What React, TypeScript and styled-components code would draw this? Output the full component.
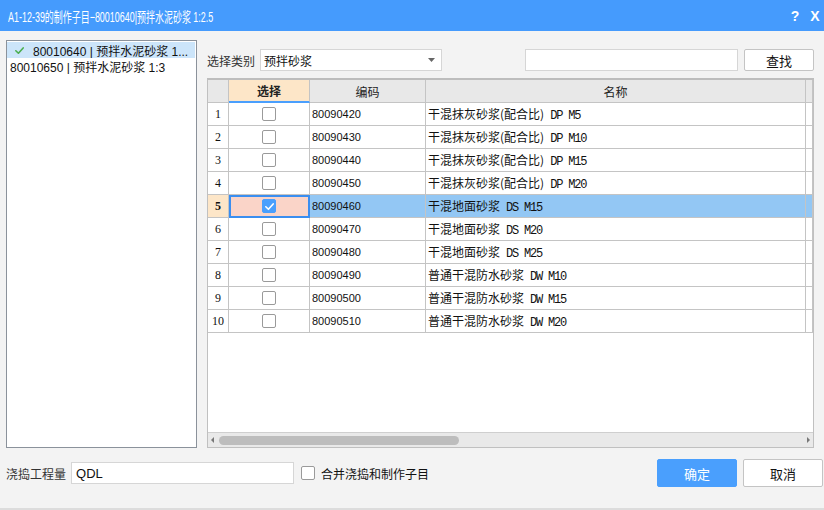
import React from "react";
import styled, { createGlobalStyle, css } from "styled-components";

const Global = createGlobalStyle`
  html, body { margin: 0; padding: 0; background: #f3f3f3; }
  body { font-family: "Liberation Sans", "Noto Sans CJK SC", sans-serif; }
  * { box-sizing: border-box; }
`;

const Window = styled.div`
  width: 824px;
  height: 510px;
  background: #f3f3f3;
  display: flex;
  flex-direction: column;
  overflow: hidden;
`;

const TitleBar = styled.div`
  height: 31px;
  flex: none;
  background: #459bfd;
  color: #fff;
  display: flex;
  align-items: center;
  padding: 0 2px 0 8px;
  font-size: 14px;
  font-family: "Liberation Sans", "Noto Sans CJK SC", sans-serif;
`;

const TitleText = styled.div`
  flex: 1;
  white-space: nowrap;
  transform: scaleX(0.64);
  transform-origin: left center;
`;

const TitleButton = styled.span<{ $width: number }>`
  width: ${(p) => p.$width}px;
  text-align: center;
  font-weight: bold;
  font-size: 14px;
  font-family: "Liberation Sans", sans-serif;
`;

const Body = styled.div`
  flex: 1;
  display: flex;
  flex-direction: column;
  padding: 9px 1px 0 6px;
`;

const MainRow = styled.div`
  height: 408px;
  display: flex;
  gap: 10px;
`;

const LeftList = styled.div`
  width: 191px;
  flex: none;
  background: #fff;
  border: 1px solid #8b929b;
  padding-top: 1px;
  font-size: 12px;
  color: #111;
`;

const ListItem = styled.div<{ $selected?: boolean }>`
  height: 16px;
  display: flex;
  align-items: center;
  white-space: nowrap;
  overflow: hidden;
  padding-left: ${(p) => (p.$selected ? "7px" : "3px")};
  background: ${(p) => (p.$selected ? "#cce5fa" : "transparent")};
  margin-right: 1px;
  gap: 8px;
`;

const RightPanel = styled.div`
  flex: 1;
  margin-right: 9px;
  padding-top: 9px;
  display: flex;
  flex-direction: column;
  gap: 7px;
`;

const Toolbar = styled.div`
  height: 22px;
  display: flex;
  align-items: center;
  font-size: 12px;
  color: #222;
`;

const Label = styled.span`
  font-size: 12px;
  color: #333;
  margin-right: 5px;
  white-space: nowrap;
`;

const Select = styled.div`
  width: 182px;
  height: 22px;
  background: #fff;
  border: 1px solid #d6d6d6;
  display: flex;
  align-items: center;
  padding: 0 6px 0 3px;
  font-size: 12px;
  color: #111;
`;

const SelectValue = styled.span`
  flex: 1;
`;

const Spacer = styled.div<{ $width?: number }>`
  flex: ${(p) => (p.$width ? "none" : "1")};
  width: ${(p) => (p.$width ? `${p.$width}px` : "auto")};
`;

const TextInput = styled.div<{ $width: number }>`
  width: ${(p) => p.$width}px;
  height: 22px;
  background: #fff;
  border: 1px solid #d6d6d6;
  display: flex;
  align-items: center;
  padding-left: 4px;
  font-size: 13px;
  color: #111;
`;

const Button = styled.button<{ $primary?: boolean; $width: number; $height: number }>`
  width: ${(p) => p.$width}px;
  height: ${(p) => p.$height}px;
  border-radius: 2px;
  font-family: "Liberation Sans", "Noto Sans CJK SC", sans-serif;
  font-size: 13px;
  padding: 0;
  cursor: default;
  ${(p) =>
    p.$primary
      ? css`
          background: #4a9ffd;
          border: 1px solid #4a9ffd;
          color: #fff;
        `
      : css`
          background: #fff;
          border: 1px solid #c4c4c4;
          color: #111;
        `}
`;

const Table = styled.div`
  flex: 1;
  display: flex;
  flex-direction: column;
  background: #fff;
  border: 1px solid #c0c0c0;
  border-top: 2px solid #bdbdbd;
  overflow: hidden;
`;

const GridRow = styled.div`
  display: grid;
  grid-template-columns: 21px 81px 116px 380px 1fr;
  height: 23px;
`;

const HeaderCell = styled.div<{ $active?: boolean }>`
  background: ${(p) => (p.$active ? "#fde6c8" : "#e8e8e8")};
  border-right: 1px solid #c4c4c4;
  border-bottom: ${(p) => (p.$active ? "2px solid #4a9ffd" : "1px solid #c4c4c4")};
  display: flex;
  align-items: center;
  justify-content: center;
  font-size: 12px;
  font-weight: ${(p) => (p.$active ? "bold" : "normal")};
  color: #222;
  font-family: "Noto Sans CJK SC", sans-serif;
`;

const Cell = styled.div<{ $bg?: string; $align?: string; $bold?: boolean }>`
  background: ${(p) => p.$bg || "#fff"};
  border-right: 1px solid #c4c4c4;
  border-bottom: 1px solid #c4c4c4;
  display: flex;
  align-items: center;
  justify-content: ${(p) => p.$align || "flex-start"};
  font-size: 12px;
  color: #111;
  white-space: nowrap;
  overflow: hidden;
  font-weight: ${(p) => (p.$bold ? "bold" : "normal")};
`;

const NumCell = styled(Cell)`
  font-family: "Liberation Serif", serif;
  justify-content: center;
`;

const CheckCell = styled(Cell)<{ $focus?: boolean }>`
  ${(p) =>
    p.$focus &&
    css`
      outline: 2px solid #3a8ef0;
      outline-offset: -2px;
    `}
`;

const CodeCell = styled(Cell)`
  font-family: "Liberation Sans", sans-serif;
  font-size: 11px;
  padding-left: 2px;
`;

const NameCell = styled(Cell)`
  font-family: "Noto Sans CJK SC", sans-serif;
  padding-left: 2px;
`;

const Latin = styled.span`
  font-family: "Liberation Mono", monospace;
  font-size: 12px;
  letter-spacing: -1.2px;
  white-space: pre;
`;

const Box = styled.span<{ $checked?: boolean }>`
  width: 14px;
  height: 14px;
  border-radius: 2px;
  border: 1px solid ${(p) => (p.$checked ? "#4a9ffd" : "#9a9a9a")};
  background: ${(p) => (p.$checked ? "#4a9ffd" : "#fff")};
  display: inline-flex;
  align-items: center;
  justify-content: center;
  flex: none;
`;

const EmptyArea = styled.div`
  flex: 1;
  background: #fff;
`;

const ScrollBar = styled.div`
  height: 15px;
  flex: none;
  background: #e9e9e9;
  border-top: 1px solid #cfcfcf;
  display: flex;
  align-items: center;
  padding: 0 3px;
  gap: 5px;
`;

const Thumb = styled.div`
  width: 240px;
  height: 9px;
  border-radius: 5px;
  background: #bdbdbd;
`;

const Arrow = styled.span<{ $dir: "left" | "right" }>`
  width: 0;
  height: 0;
  border-top: 3px solid transparent;
  border-bottom: 3px solid transparent;
  ${(p) =>
    p.$dir === "left"
      ? css`border-right: 3px solid #777;`
      : css`border-left: 3px solid #777;`}
`;

const Footer = styled.div`
  margin-top: 11px;
  height: 28px;
  display: flex;
  align-items: center;
`;

const CheckLabel = styled.label`
  display: flex;
  align-items: center;
  gap: 6px;
  margin-left: 7px;
  font-size: 12px;
  color: #111;
`;

const FooterButtons = styled.div`
  margin-left: auto;
  display: flex;
  gap: 6px;
`;

const BottomStrip = styled.div`
  height: 2px;
  flex: none;
  background: #dcdcdc;
`;

const CheckIcon = ({ color, size }: { color: string; size: number }) => (
  <svg width={size} height={size} viewBox="0 0 12 12">
    <path d="M2 6.3 L4.8 9 L10 3.2" fill="none" stroke={color} strokeWidth="1.8" strokeLinecap="round" strokeLinejoin="round" />
  </svg>
);

type Row = { code: string; cn: string; latin: string };

const rows: Row[] = [
  { code: "80090420", cn: "干混抹灰砂浆(配合比)", latin: " DP M5" },
  { code: "80090430", cn: "干混抹灰砂浆(配合比)", latin: " DP M10" },
  { code: "80090440", cn: "干混抹灰砂浆(配合比)", latin: " DP M15" },
  { code: "80090450", cn: "干混抹灰砂浆(配合比)", latin: " DP M20" },
  { code: "80090460", cn: "干混地面砂浆", latin: " DS M15" },
  { code: "80090470", cn: "干混地面砂浆", latin: " DS M20" },
  { code: "80090480", cn: "干混地面砂浆", latin: " DS M25" },
  { code: "80090490", cn: "普通干混防水砂浆", latin: " DW M10" },
  { code: "80090500", cn: "普通干混防水砂浆", latin: " DW M15" },
  { code: "80090510", cn: "普通干混防水砂浆", latin: " DW M20" },
];

export default function App() {
  const selected = 4;
  return (
    <>
      <Global />
      <Window>
        <TitleBar>
          <TitleText>A1-12-39的制作子目−80010640|预拌水泥砂浆 1:2.5</TitleText>
          <TitleButton $width={26}>?</TitleButton>
          <TitleButton $width={14}>X</TitleButton>
        </TitleBar>
        <Body>
          <MainRow>
            <LeftList>
              <ListItem $selected>
                <CheckIcon color="#4caf50" size={11} />
                <span>80010640 | 预拌水泥砂浆 1...</span>
              </ListItem>
              <ListItem>80010650 | 预拌水泥砂浆 1:3</ListItem>
            </LeftList>
            <RightPanel>
              <Toolbar>
                <Label>选择类别</Label>
                <Select>
                  <SelectValue>预拌砂浆</SelectValue>
                  <svg width="7" height="4" viewBox="0 0 7 4">
                    <path d="M0 0 L7 0 L3.5 4 Z" fill="#666" />
                  </svg>
                </Select>
                <Spacer />
                <TextInput $width={213} />
                <Spacer $width={6} />
                <Button $width={70} $height={22}>查找</Button>
              </Toolbar>
              <Table>
                <GridRow>
                  <HeaderCell />
                  <HeaderCell $active>选择</HeaderCell>
                  <HeaderCell>编码</HeaderCell>
                  <HeaderCell>名称</HeaderCell>
                  <HeaderCell />
                </GridRow>
                {rows.map((r, i) => {
                  const sel = i === selected;
                  const bg = sel ? "#93c7f4" : "#fff";
                  return (
                    <GridRow key={r.code}>
                      <NumCell $bg={sel ? "#fde6c8" : "#fff"} $bold={sel}>
                        {i + 1}
                      </NumCell>
                      <CheckCell $align="center" $bg={sel ? "#fad4c8" : "#fff"} $focus={sel}>
                        <Box $checked={sel}>{sel && <CheckIcon color="#fff" size={11} />}</Box>
                      </CheckCell>
                      <CodeCell $bg={bg}>{r.code}</CodeCell>
                      <NameCell $bg={bg}>
                        <span>
                          {r.cn}
                          <Latin>{r.latin}</Latin>
                        </span>
                      </NameCell>
                      <Cell $bg={bg} />
                    </GridRow>
                  );
                })}
                <EmptyArea />
                <ScrollBar>
                  <Arrow $dir="left" />
                  <Thumb />
                  <Spacer />
                  <Arrow $dir="right" />
                </ScrollBar>
              </Table>
            </RightPanel>
          </MainRow>
          <Footer>
            <Label>浇捣工程量</Label>
            <TextInput $width={223}>QDL</TextInput>
            <CheckLabel>
              <Box />
              合并浇捣和制作子目
            </CheckLabel>
            <FooterButtons>
              <Button $primary $width={80} $height={28}>确定</Button>
              <Button $width={80} $height={28}>取消</Button>
            </FooterButtons>
          </Footer>
        </Body>
        <BottomStrip />
      </Window>
    </>
  );
}
